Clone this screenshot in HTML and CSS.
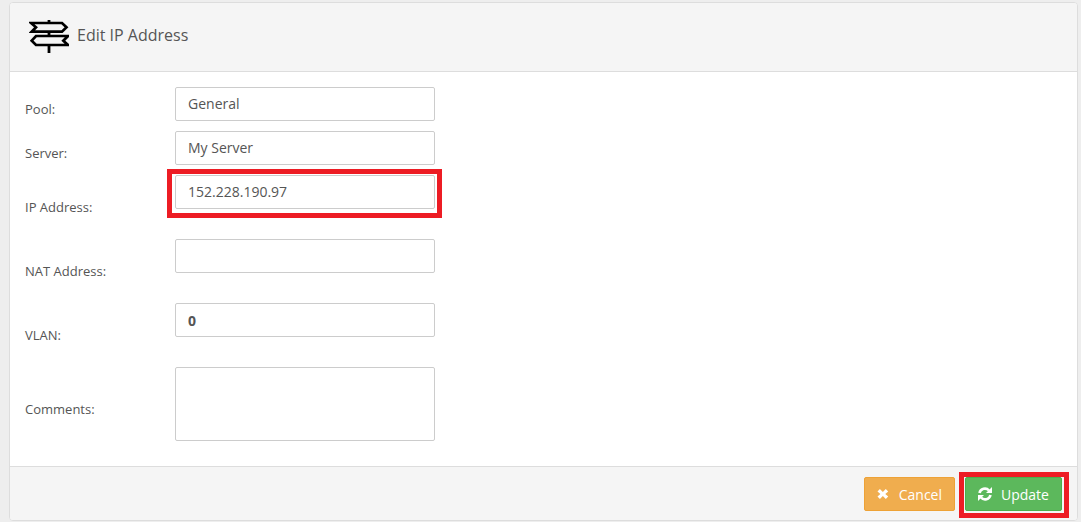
FILE: index.html
```html
<!DOCTYPE html>
<html lang="en">
<head>
  <meta charset="UTF-8" />
  <title>Edit IP Address</title>
  <link rel="stylesheet" href="styles.css">
</head>
<body>

<div class="panel">
  <div class="panel-head">
    <svg class="head-icon" width="40" height="33" viewBox="0 0 40 33" fill="none" stroke="#000" stroke-width="2.700">
      <path d="M20 0v3M20 11.700v4.300M20 25v8" stroke-width="2.800"/>
      <path d="M2 3h31l4.500 4.300-4.500 4.400h-30.300l4.300-4.400z"/>
      <path d="M7 16h32l-4.700 4.700 4.700 4.300h-32l-4.300-4.300z"/>
    </svg>
    <span class="panel-title">Edit IP Address</span>
  </div>

  <form class="panel-body">
    <div class="row short">
      <label>Pool:</label>
      <div class="field"><input type="text" value="General"></div>
    </div>
    <div class="row short">
      <label>Server:</label>
      <div class="field"><input type="text" value="My Server"></div>
    </div>
    <div class="row">
      <label>IP Address:</label>
      <div class="field">
        <input type="text" value="152.228.190.97">
        <span class="mark mark-field"></span>
      </div>
    </div>
    <div class="row">
      <label>NAT Address:</label>
      <div class="field"><input type="text"></div>
    </div>
    <div class="row">
      <label>VLAN:</label>
      <div class="field"><input class="bold" type="text" value="0"></div>
    </div>
    <div class="row last">
      <label>Comments:</label>
      <div class="field"><textarea></textarea></div>
    </div>
  </form>

  <div class="panel-foot">
    <button class="btn btn-cancel" type="button">
      <svg width="12" height="12" viewBox="0 0 12 12"><path d="M3 1l3 3 3-3 2.500 2.500-3 2.500 3 2.500-2.500 2.500-3-3-3 3-2.500-2.500 3-2.500-3-2.500z" fill="#fff"/></svg>
      Cancel
    </button>
    <button class="btn btn-update" type="button">
      <svg width="14" height="14" viewBox="0 0 14 14" fill="none" stroke="#fff" stroke-width="2.600">
        <path d="M1.500 6a5.500 5.500 0 0 1 9.500-2.500"/>
        <path d="M12.500 8a5.500 5.500 0 0 1-9.500 2.500"/>
        <path d="M14 0v6H8z" fill="#fff" stroke="none"/>
        <path d="M0 14V8h6z" fill="#fff" stroke="none"/>
      </svg>
      Update
      <span class="mark mark-btn"></span>
    </button>
  </div>
</div>

</body>
</html>
```

FILE: styles.css
```css
* { box-sizing: border-box; }
html, body { height: 100%; }
body {
  margin: 0;
  padding: 2px 3px 1px 9px;
  background: #eeeeee;
  font-family: "Open Sans", sans-serif;
  font-size: 13px;
  color: #555;
  overflow: hidden;
}
.panel {
  height: 519px;
  display: flex;
  flex-direction: column;
  background: #fff;
  border: 1px solid #dddddd;
  border-radius: 4px;
  overflow: hidden;
}
.panel-head {
  height: 69px;
  flex: none;
  display: flex;
  align-items: center;
  padding-left: 19px;
  background: #f5f5f5;
  border-bottom: 1px solid #dddddd;
}
.head-icon { margin-right: 8px; margin-bottom: 1px; }
.panel-title { font-size: 16px; color: #555; margin-bottom: 4px; }

.panel-body {
  flex: 1;
  padding-top: 15px;
}
.row {
  display: flex;
  height: 64px;
  padding-left: 15px;
}
.row.short { height: 44px; }
.row.last { height: 80px; }
.row label {
  width: 150px;
  padding-top: 23px;
  line-height: 18px;
  font-size: 13px;
  color: #555;
}
.row.short label { padding-top: 13px; }
.row.last label { padding-top: 33px; }
.field {
  position: relative;
  width: 260px;
  height: 34px;
}
input, textarea {
  display: block;
  width: 260px;
  height: 34px;
  padding: 5px 12px 7px;
  border: 1px solid #cccccc;
  border-radius: 2px;
  background: #fff;
  font-family: inherit;
  font-size: 14px;
  color: #555;
  outline: none;
}
input.bold { font-weight: 700; padding: 6px 12px; }
textarea { height: 74px; resize: none; }

.panel-foot {
  height: 54px;
  flex: none;
  display: flex;
  justify-content: flex-end;
  gap: 10px;
  padding: 10px 15px 0 0;
  background: #f5f5f5;
  border-top: 1px solid #dddddd;
}
.btn {
  position: relative;
  height: 34px;
  padding: 0 12px;
  display: flex;
  align-items: center;
  gap: 9px;
  border: 1px solid transparent;
  border-radius: 2px;
  font-family: inherit;
  font-size: 14px;
  color: #fff;
}
.btn-cancel { width: 91px; gap: 10px; background: #f0ad4e; border-color: #eea236; }
.btn-update { width: 97px; background: #5cb85c; border-color: #4cae4c; }

/* red annotation boxes */
.mark {
  position: absolute;
  border: 5px solid #ed1c24;
  pointer-events: none;
}
.mark-field { left: -8px; top: -6px; width: 275px; height: 49px; }
.mark-btn { left: -7px; top: -6px; width: 110px; height: 46px; }
```
